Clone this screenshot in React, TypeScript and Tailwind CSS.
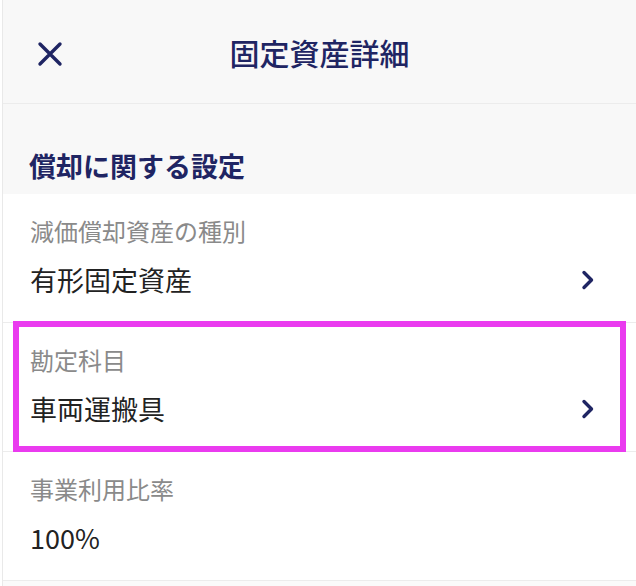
import React from "react";

const navy = "text-[#1f2563]";

function Chevron() {
  return (
    <svg width="14" height="20" viewBox="0 0 14 20" className="shrink-0">
      <path d="M3 2.5 L10.5 10 L3 17.5" fill="none" stroke="#1f2563" strokeWidth="3.4" strokeLinecap="round" strokeLinejoin="round" />
    </svg>
  );
}

function Row({ label, value, link, highlight }: { label: string; value: string; link?: boolean; highlight?: boolean }) {
  return (
    <div className="relative h-[129px] border-b border-[#ececec] bg-white pl-[27px] pr-[41px] pt-[21px]">
      <div className="text-[24px] leading-[32px] text-[#8a8a8a]">{label}</div>
      <div className="mt-[16px] flex items-center justify-between">
        <span className="text-[27px] leading-[34px] text-[#222]">{value}</span>
        {link && <Chevron />}
      </div>
      {/* annotation frame */}
      {highlight && (
        <div className="pointer-events-none absolute -top-[2px] -bottom-[1px] left-[10px] right-[10px] border-[6px] border-[#ea3bef]" />
      )}
    </div>
  );
}

export default function App() {
  return (
    <div className="w-[636px] h-[586px] overflow-hidden bg-white pl-[2px] font-['Noto_Sans_CJK_JP','Noto_Sans',sans-serif]">
      <div className="h-full border-l border-[#e9e9e9] bg-[#fafafa]">
        <header className="relative flex h-[104px] items-center justify-center border-b border-[#ececec] bg-[#f8f8f8]">
          <svg width="26" height="26" viewBox="0 0 26 26" className="absolute left-[34px] top-[41px]">
            <path d="M3 3 L23 23 M23 3 L3 23" stroke="#1f2563" strokeWidth="3.4" strokeLinecap="round" />
          </svg>
          <h1 className={`text-[30px] leading-[36px] font-medium ${navy}`}>固定資産詳細</h1>
        </header>

        <div className="flex h-[90px] items-end bg-[#f8f8f8] pb-[12px] pl-[26px]">
          <h2 className={`text-[27px] leading-[32px] font-bold ${navy}`}>償却に関する設定</h2>
        </div>

        <Row label="減価償却資産の種別" value="有形固定資産" link />
        <Row label="勘定科目" value="車両運搬具" link highlight />
        <Row label="事業利用比率" value="100%" />
      </div>
    </div>
  );
}
